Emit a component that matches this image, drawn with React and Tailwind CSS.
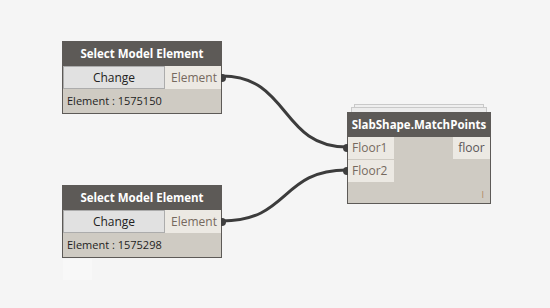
import React from 'react';

const font = { fontFamily: '"Open Sans", "Noto Sans", sans-serif' };

function Port({ side }) {
  return (
    <div
      className={`absolute top-1/2 -translate-y-1/2 w-[5px] h-[8px] bg-[#3f3f3f] ${side === 'right' ? 'right-[-5px] rounded-r-full' : 'left-[-5px] rounded-l-full'}`}
    />
  );
}

function SelectNode({ top, id }) {
  return (
    <div className="absolute left-[62px] w-[160px] border border-[#5d5a57] bg-[#cfcbc3]" style={{ top }}>
      <div className="h-[24px] bg-[#5d5a57] text-white font-bold text-[11.5px] flex items-center justify-center">
        Select Model Element
      </div>
      <div className="h-[23px] flex">
        <div className="flex-1 bg-[#e1e1e1] border border-[#acacac] flex items-center justify-center text-[12px] text-[#222]">
          Change
        </div>
        <div className="relative w-[56px] bg-[#ece9e3] flex items-center pl-[6px] text-[12px] text-[#76695e]">
          Element
          <Port side="right" />
        </div>
      </div>
      <div className="h-[24px] flex items-center pl-[4px] text-[11px] text-[#1e1e1e]">
        Element : {id}
      </div>
    </div>
  );
}

export default function App() {
  return (
    <div className="relative w-[550px] h-[308px] bg-[#f5f5f5] overflow-hidden" style={font}>
      <svg className="absolute inset-0" width="550" height="308">
        <path d="M222 76 C 290 76, 280 147, 347 147" fill="none" stroke="#3c3c3c" strokeWidth="3" />
        <path d="M222 221 C 290 221, 280 170, 347 170" fill="none" stroke="#3c3c3c" strokeWidth="3" />
      </svg>

      <SelectNode top={41} id="1575150" />
      <SelectNode top={185} id="1575298" />

      <div className="absolute left-[63px] top-[259px] w-[29px] h-[21px] bg-[#f8f8f8]" />

      {/* stacked copies behind */}
      <div className="absolute left-[354px] top-[104px] w-[130px] h-[3px] border-t border-x border-[#c9c9c9] bg-[#efefef]" />
      <div className="absolute left-[351px] top-[107px] w-[136px] h-[5px] border-t border-x border-[#c9c9c9] bg-[#ececec]" />

      <div className="absolute left-[347px] top-[112px] w-[144px] h-[92px] border border-[#5d5a57] bg-[#cfcbc3] flex flex-col">
        <div className="h-[24px] bg-[#5d5a57] text-white font-bold text-[11.5px] flex items-center justify-center">
          SlabShape.MatchPoints
        </div>
        <div className="flex-1 flex">
          <div className="flex flex-col gap-[1px]">
            <div className="relative h-[22px] w-[46px] bg-[#ece9e3] flex items-center pl-[4px] text-[12px] text-[#76695e]">
              Floor1
              <Port side="left" />
            </div>
            <div className="relative h-[22px] w-[46px] bg-[#ece9e3] flex items-center pl-[4px] text-[12px] text-[#76695e]">
              Floor2
              <Port side="left" />
            </div>
          </div>
          <div className="flex-1" />
          <div className="flex flex-col justify-between items-end">
            <div className="h-[22px] w-[37px] bg-[#ece9e3] flex items-center justify-center text-[12px] text-[#5a5658]">
              floor
            </div>
            <div className="pr-[6px] pb-[4px] text-[9px] leading-none text-[#b08860]">I</div>
          </div>
        </div>
      </div>
    </div>
  );
}
